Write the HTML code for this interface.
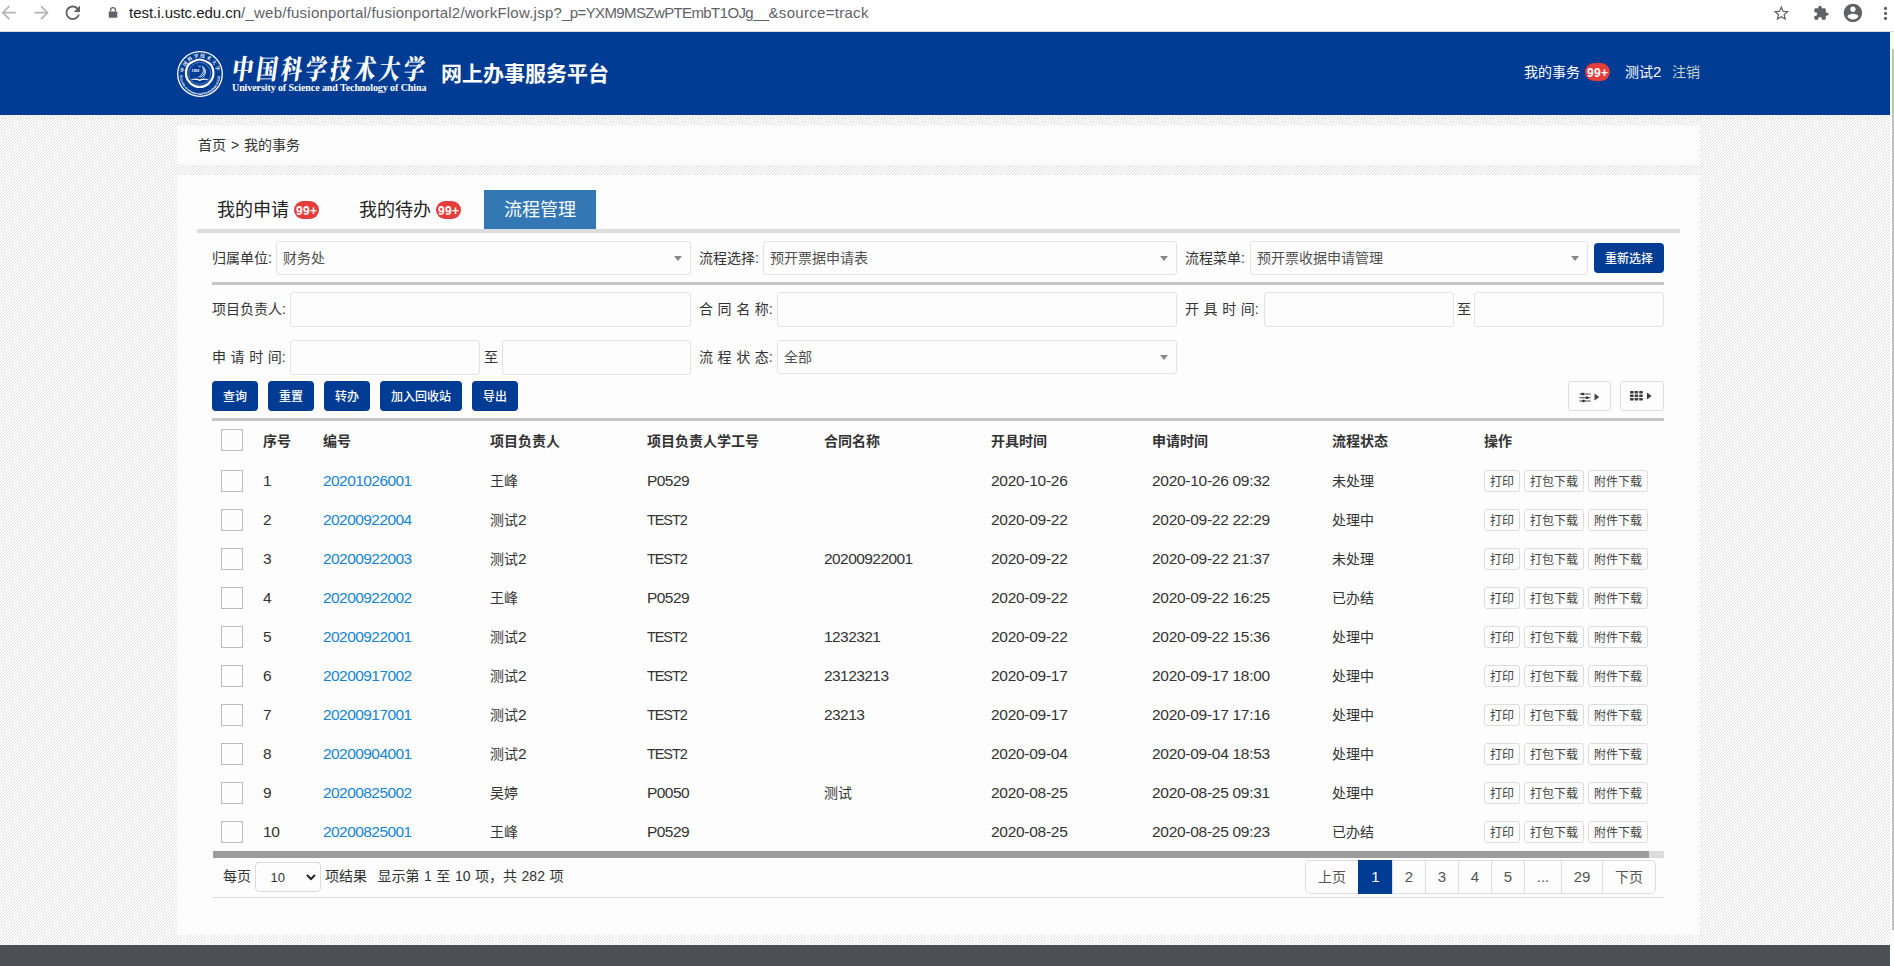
<!DOCTYPE html>
<html lang="zh-CN">
<head>
<meta charset="utf-8">
<title>网上办事服务平台</title>
<style>
*{box-sizing:border-box;margin:0;padding:0}
html,body{width:1894px;height:966px;overflow:hidden;background:#fff}
body{font-family:"Liberation Sans","Noto Sans CJK SC",sans-serif;font-size:14px;color:#333;position:relative}
a{text-decoration:none;color:inherit}
ul{list-style:none}
#hatch{position:absolute;left:0;top:115px;width:1890px;height:851px;display:block}
/* browser chrome */
#chrome{position:absolute;left:0;top:0;width:1894px;height:32px;background:#fff;border-bottom:1px solid #d9dce0}
#chrome svg{position:absolute;display:block}
#url{position:absolute;left:129px;top:3px;height:20px;line-height:20px;font-size:15px;color:#5f6368;white-space:nowrap}
#url b{font-weight:normal;color:#202124}
#vs{position:absolute;left:1890px;top:32px;width:4px;height:934px;background:#fdfdfd}
#vs i{position:absolute;left:2px;top:17px;width:2px;height:881px;background:#c1c1c1}
/* header */
#hdr{position:absolute;left:0;top:32px;width:1890px;height:83px;background:#003b94;color:#fff}
#emb{position:absolute;left:176px;top:18px;display:block}
#cn{position:absolute;left:232px;top:20px;width:200px;height:32px;font-family:"Noto Serif CJK SC","Liberation Serif",serif;font-weight:900;font-size:21px;line-height:32px;letter-spacing:3.5px;white-space:nowrap;transform:skewX(-8deg) scaleY(1.3);transform-origin:50% 60%}
#en{position:absolute;left:232px;top:50px;font-family:"Liberation Serif",serif;font-weight:bold;font-size:10px;line-height:12px;white-space:nowrap;letter-spacing:-0.09px}
#ttl{position:absolute;left:441px;top:27px;font-size:21px;line-height:30px;font-weight:bold;white-space:nowrap}
#nav{position:absolute;left:1524px;top:30px;height:20px;line-height:20px;font-size:14px;white-space:nowrap}
#nav a{position:absolute;top:0}
.bdg{display:inline-block;background:#e53c3c;color:#fff;font-weight:bold;font-size:12px;line-height:20px;height:18px;width:25px;border-radius:9px;text-align:center;letter-spacing:0.3px;text-indent:0.5px;overflow:hidden}
/* panels */
.panel{position:absolute;left:177px;width:1523px;background:#fdfdfd}
#crumb{top:125px;height:40px;line-height:40px;padding-left:21px;font-size:14px;color:#333;word-spacing:1px}
#main{top:175px;height:760px}
#foot{position:absolute;left:0;top:945px;width:1890px;height:21px;background:#4c5055}
/* tabs */
#tabs{position:absolute;left:20px;top:15px;width:1483px;height:43px;border-bottom:4px solid #ddd;white-space:nowrap;font-size:0}
#tabs li{display:inline-block;vertical-align:top;height:39px;line-height:41px;overflow:hidden;padding:0 20px;font-size:18px;color:#222}
#tabs li .bdg{margin-left:5px;vertical-align:middle;position:relative;top:-1px}
#tabs li.on{background:#3377b5;color:#fff;margin-left:3px}
/* form */
.f{position:absolute;display:block;height:34px;line-height:34px;font-size:14px;color:#333;white-space:pre;word-spacing:0.7px}
.i{position:absolute;height:34px;border:1px solid #e2e2e2;border-radius:3px;background:#fdfdfd;font-size:14px;line-height:32px;color:#505050;padding-left:6px;white-space:nowrap}
.i.s:after{content:"";position:absolute;right:8px;top:14px;border-left:4px solid transparent;border-right:4px solid transparent;border-top:5px solid #888}
.hr{position:absolute;left:35px;width:1452px;height:3px;background:#c6c6c6}
button{font-family:inherit;border:0;padding:0;margin:0;cursor:pointer}
input{font-family:inherit;outline:none;margin:0}
.btn{position:absolute;display:block;height:30px;line-height:33px;overflow:hidden;background:#003b94;color:#fff;font-size:12px;font-weight:500;border-radius:4px;text-align:center;white-space:nowrap}
.ib{position:absolute;height:30px;border:1px solid #ddd;border-radius:3px;background:#fdfdfd}
.ib svg{position:absolute;display:block}
/* table */
#tbl{position:absolute;left:35px;top:246px;width:1452px;border-collapse:collapse;table-layout:fixed}
#tbl th{height:40px;font-size:14px;font-weight:bold;text-align:left;padding:0 0 2px 8px;color:#333;white-space:nowrap;vertical-align:middle}
#tbl td{height:39px;font-size:14px;text-align:left;padding:0 0 0 8px;color:#333;white-space:nowrap;vertical-align:middle;overflow:hidden}
#tbl .z{padding-bottom:2px}
#tbl .n{font-size:15.5px;letter-spacing:-0.28px}
#tbl .k{letter-spacing:-0.56px}
#tbl .t{font-size:14.5px;letter-spacing:-1.1px}
#tbl .c{padding-left:9px}
.cb{display:block;width:22px;height:22px;border:1px solid #bdbdbd;background:#fdfdfd}
#tbl thead .cb{position:relative;top:0px}
.lk{color:#1685d1}
.op{font-size:0 !important}
.ob{display:inline-block;height:22px;line-height:22px;overflow:hidden;border:1px solid #ddd;border-radius:3px;padding:0 5px;font-size:12px;color:#444;margin-right:4px;vertical-align:middle;background:#fdfdfd}
/* bottom */
#hsb{position:absolute;left:36px;top:676px;width:1451px;height:7px;background:#dcdcdc}
#hsb i{display:block;width:1436px;height:7px;background:#9c9c9c}
#pinfo{position:absolute;left:46px;top:686px;height:30px;line-height:30px;font-size:14px;color:#333;white-space:nowrap;word-spacing:0.65px}
#psel{position:absolute;left:78px;top:687px;width:66px;height:30px;border:1px solid #d8dbe2;border-radius:4px;background:#fdfdfd;font-size:13px;line-height:30px;padding-left:14.5px;color:#333}
#pline{position:absolute;left:35px;top:722px;width:1452px;height:1px;background:#ddd}
#pg{position:absolute;left:1128px;top:685px;height:34px;font-size:0;white-space:nowrap}
#pg li{display:inline-block;vertical-align:top;height:34px;line-height:32px;border:1px solid #ddd;margin-left:-1px;text-align:center;font-size:15px;color:#555;background:#fdfdfd}
#pg li.z{font-size:14px}
#pg li:first-child{margin-left:0;border-radius:5px 0 0 5px}
#pg li:last-child{border-radius:0 5px 5px 0}
#pg li.on{background:#003b94;border-color:#003b94;color:#fff}

</style>
</head>
<body>
<svg id="hatch" width="1890" height="851" shape-rendering="crispEdges"><defs><pattern id="hp" width="3" height="3" patternUnits="userSpaceOnUse"><rect x="0" y="0" width="1" height="1" fill="#dedede"/><rect x="2" y="1" width="1" height="1" fill="#dedede"/><rect x="1" y="2" width="1" height="1" fill="#dedede"/></pattern></defs><rect width="1890" height="851" fill="#fff"/><rect width="1890" height="851" fill="url(#hp)"/></svg>

<div id="chrome">
  <svg style="left:-1.6px;top:2.2px" width="21.3" height="21.3" viewBox="0 0 24 24"><path fill="#b2b5b9" d="M20 11H7.83l5.59-5.59L12 4l-8 8 8 8 1.41-1.41L7.83 13H20v-2z"/></svg>
  <svg style="left:31.1px;top:2.2px" width="21.3" height="21.3" viewBox="0 0 24 24"><path fill="#b2b5b9" d="M12 4l-1.41 1.41L16.17 11H4v2h12.17l-5.58 5.59L12 20l8-8z"/></svg>
  <svg style="left:62.3px;top:2.1px" width="21.6" height="21.6" viewBox="0 0 24 24"><path fill="#5f6368" d="M17.65 6.35C16.2 4.9 14.21 4 12 4c-4.42 0-7.99 3.58-7.99 8s3.57 8 7.99 8c3.73 0 6.84-2.55 7.73-6h-2.08c-.82 2.33-3.04 4-5.65 4-3.31 0-6-2.69-6-6s2.69-6 6-6c1.66 0 3.14.69 4.22 1.78L13 11h7V4l-2.35 2.35z"/></svg>
  <svg style="left:107px;top:6px" width="12" height="13" viewBox="0 0 12 13"><rect x="1.7" y="5.4" width="8.6" height="6.4" rx="0.8" fill="#5f6368"/><path d="M3.6 5.6V4a2.4 2.4 0 0 1 4.8 0v1.6" fill="none" stroke="#5f6368" stroke-width="1.3"/></svg>
  <div id="url"><span style="letter-spacing:0.236px"><b style="letter-spacing:-0.03px">test.i.ustc.edu.cn</b>/_web/fusionportal/fusionportal2/workFlow.jsp?</span><span style="letter-spacing:-0.61px">_p=YXM9MSZwPTEmbT1OJg__</span><span style="letter-spacing:0.3px">&amp;source=track</span></div>
  <svg style="left:1772px;top:4.2px" width="18.6" height="18.6" viewBox="0 0 24 24"><path fill="#5f6368" d="M22 9.24l-7.19-.62L12 2 9.19 8.63 2 9.24l5.46 4.73L5.82 21 12 17.27 18.18 21l-1.63-7.03L22 9.24zM12 15.4l-3.76 2.27 1-4.28-3.32-2.88 4.38-.38L12 6.1l1.71 4.04 4.38.38-3.32 2.88 1 4.28L12 15.4z"/></svg>
  <svg style="left:1812.6px;top:5.1px" width="16.2" height="16.2" viewBox="0 0 24 24"><path fill="#5f6368" d="M20.5 11H19V7c0-1.1-.9-2-2-2h-4V3.5C13 2.12 11.88 1 10.5 1S8 2.12 8 3.5V5H4c-1.1 0-1.99.9-1.99 2v3.8H3.5c1.49 0 2.7 1.21 2.7 2.7s-1.21 2.7-2.7 2.7H2V20c0 1.1.9 2 2 2h3.8v-1.5c0-1.49 1.21-2.7 2.7-2.7 1.49 0 2.7 1.21 2.7 2.7V22H17c1.1 0 2-.9 2-2v-4h1.5c1.38 0 2.5-1.12 2.5-2.5S21.88 11 20.5 11z"/></svg>
  <svg style="left:1842.2px;top:2px" width="21.9" height="21.9" viewBox="0 0 24 24"><path fill="#5f6368" d="M12 2C6.48 2 2 6.48 2 12s4.48 10 10 10 10-4.48 10-10S17.52 2 12 2zm0 3c1.66 0 3 1.34 3 3s-1.34 3-3 3-3-1.34-3-3 1.34-3 3-3zm0 14.2c-2.5 0-4.71-1.28-6-3.22.03-1.99 4-3.08 6-3.08 1.99 0 5.97 1.09 6 3.08-1.29 1.94-3.5 3.22-6 3.22z"/></svg>
  <svg style="left:1882px;top:5px" width="7" height="17" viewBox="0 0 7 17"><circle cx="3.5" cy="3.4" r="1.6" fill="#5f6368"/><circle cx="3.5" cy="8.4" r="1.6" fill="#5f6368"/><circle cx="3.5" cy="13.4" r="1.6" fill="#5f6368"/></svg>
</div>
<div id="vs"><i></i></div>

<div id="hdr">
  <svg id="emb" width="48" height="48" viewBox="-24 -24 48 48"><defs><path id="arcT" d="M-16.6 0A16.6 16.6 0 0 1 16.6 0"/><path id="arcB" d="M-19.4 1.5A19.4 19.4 0 0 0 19.4 1.5"/></defs><circle r="22.3" fill="none" stroke="#fff" stroke-width="1.3"/><path d="M-19.9 2A20 20 0 0 0 19.9 2" fill="none" stroke="#fff" stroke-width="0.5"/><text font-family="'Noto Serif CJK SC',serif" font-weight="900" font-size="4.6" letter-spacing="1.5" fill="#fff" text-anchor="middle"><textPath href="#arcT" startOffset="50%">中国科学技术大学</textPath></text><text font-family="'Liberation Serif',serif" font-weight="bold" font-size="3" letter-spacing="0.15" fill="#fff" text-anchor="middle"><textPath href="#arcB" startOffset="50%">University of Science and Technology of China</textPath></text><g transform="translate(-0.3,-0.6) scale(0.95)"><path d="M0 -14.6C3.2 -14.6 6 -13 9.4 -11.2C12.6 -9.4 13.6 -6.4 14.2 -3C14.8 0.6 14.6 3.6 12.6 6.8C10.6 10 8.4 12 5 13.4C1.8 14.6 -1.8 14.6 -5 13.4C-8.4 12 -10.6 10 -12.6 6.8C-14.6 3.6 -14.8 0.6 -14.2 -3C-13.6 -6.4 -12.6 -9.4 -9.4 -11.2C-6 -13 -3.2 -14.6 0 -14.6Z" fill="none" stroke="#fff" stroke-width="2.3"/><circle r="11.6" fill="none" stroke="#fff" stroke-width="0.5" opacity="0.7"/><text x="-4.6" y="-1.4" font-family="'Liberation Sans',sans-serif" font-weight="bold" font-size="3.6" fill="#fff" text-anchor="middle">1958</text><path d="M-1.5 4.2C3 1.6 5.2 -2.4 3 -7.4C7.4 -3.4 6.6 1 3 4.4M0.6 4.2C4.4 1.8 6.4 -1.6 5 -5M-8.6 6.4C-5.6 6.2 -3 5.4 0 7C3 5.4 5.6 6.2 8.6 6.4" fill="none" stroke="#fff" stroke-width="0.9"/><path d="M-8.6 6.4C-5.6 5.4 -2.6 5 0 6.6C2.6 5 5.6 5.4 8.6 6.4C5.6 6.6 2.6 6.4 0 8C-2.6 6.4 -5.6 6.6 -8.6 6.4Z" fill="#fff"/><path d="M-1.2 -8.2L0 -6.6L1.2 -8.2" fill="none" stroke="#fff" stroke-width="0.7"/></g></svg>
  <div id="cn">中国科学技术大学</div>
  <div id="en">University of Science and Technology of China</div>
  <div id="ttl">网上办事服务平台</div>
  <div id="nav"><a style="left:0">我的事务</a><span class="bdg" style="position:absolute;left:61px;top:1px">99+</span><a style="left:101px">测试<span style="font-size:15px">2</span></a><a style="left:148px;color:#c3d4cb">注销</a></div>
</div>

<div class="panel" id="crumb">首页 &gt; 我的事务</div>
<div class="panel" id="main">
<ul id="tabs"><li>我的申请<span class="bdg">99+</span></li><li>我的待办<span class="bdg">99+</span></li><li class="on">流程管理</li></ul>
<label class="f" style="left:35px;top:66px">归属单位:</label><div class="i s" style="left:99px;top:66px;width:415px">财务处</div>
<label class="f" style="left:522px;top:66px">流程选择:</label><div class="i s" style="left:586px;top:66px;width:414px">预开票据申请表</div>
<label class="f" style="left:1008px;top:66px">流程菜单:</label><div class="i s" style="left:1073px;top:66px;width:338px">预开票收据申请管理</div>
<button class="btn" type="button" style="left:1417px;top:68px;width:70px">重新选择</button>
<div class="hr" style="top:107px"></div>
<label class="f" style="left:35px;top:117px">项目负责人:</label><input class="i" type="text" style="left:113px;top:117px;width:401px;height:35px">
<label class="f" style="left:522px;top:117px">合 同 名 称:</label><input class="i" type="text" style="left:600px;top:117px;width:400px;height:35px">
<label class="f" style="left:1008px;top:117px">开 具 时 间:</label><input class="i" type="text" style="left:1087px;top:117px;width:190px;height:35px"><label class="f" style="left:1280px;top:117px">至</label><input class="i" type="text" style="left:1297px;top:117px;width:190px;height:35px">
<label class="f" style="left:35px;top:165px">申 请 时 间:</label><input class="i" type="text" style="left:113px;top:165px;width:190px;height:35px"><label class="f" style="left:307px;top:165px">至</label><input class="i" type="text" style="left:325px;top:165px;width:189px;height:35px">
<label class="f" style="left:522px;top:165px">流 程 状 态:</label><div class="i s" style="left:600px;top:165px;width:400px">全部</div>
<button class="btn" type="button" style="left:35px;top:206px;width:46px">查询</button><button class="btn" type="button" style="left:91px;top:206px;width:46px">重置</button><button class="btn" type="button" style="left:147px;top:206px;width:46px">转办</button><button class="btn" type="button" style="left:203px;top:206px;width:82px">加入回收站</button><button class="btn" type="button" style="left:295px;top:206px;width:46px">导出</button>
<div class="ib" style="left:1391px;top:206px;width:43px"><svg style="left:9.5px;top:9.5px" width="22" height="11" viewBox="0 0 22 11"><path d="M0.4 2h11.2M0.4 5.7h11.2M0.4 9h11.2" stroke="#444" stroke-width="1.1"/><rect x="2.4" y="0.7" width="2.6" height="2.6" rx="0.8" fill="#333"/><rect x="6.8" y="4.4" width="2.6" height="2.6" rx="0.8" fill="#333"/><rect x="3.2" y="7.7" width="2.6" height="2.6" rx="0.8" fill="#333"/><path d="M15.5 1.5l4.7 3.5-4.7 3.5z" fill="#444"/></svg></div>
<div class="ib" style="left:1443px;top:206px;width:44px"><svg style="left:9px;top:9.4px" width="24" height="10" viewBox="0 0 24 10"><g fill="#3c3c3c"><rect x="0" y="0" width="3.6" height="2.5" rx="0.4"/><rect x="4.6" y="0" width="3.6" height="2.5" rx="0.4"/><rect x="9.2" y="0" width="3.6" height="2.5" rx="0.4"/><rect x="0" y="3.5" width="3.6" height="2.5" rx="0.4"/><rect x="4.6" y="3.5" width="3.6" height="2.5" rx="0.4"/><rect x="9.2" y="3.5" width="3.6" height="2.5" rx="0.4"/><rect x="0" y="7" width="3.6" height="2.5" rx="0.4"/><rect x="4.6" y="7" width="3.6" height="2.5" rx="0.4"/><rect x="9.2" y="7" width="3.6" height="2.5" rx="0.4"/><path d="M16.9 1.6l4.8 3.5-4.8 3.5z"/></g></svg></div>
<div class="hr" style="top:243px"></div>

<table id="tbl"><colgroup><col style="width:43px"><col style="width:60px"><col style="width:167px"><col style="width:157px"><col style="width:177px"><col style="width:167px"><col style="width:161px"><col style="width:180px"><col style="width:152px"><col style="width:188px"></colgroup>
<thead><tr><th class="c"><span class="cb"></span></th><th>序号</th><th>编号</th><th>项目负责人</th><th>项目负责人学工号</th><th>合同名称</th><th>开具时间</th><th>申请时间</th><th>流程状态</th><th>操作</th></tr></thead>
<tbody>
<tr><td class="c"><span class="cb"></span></td><td class="n">1</td><td class="n k"><a class="lk">20201026001</a></td><td class="z">王峰</td><td class="n k">P0529</td><td class="z"></td><td class="n">2020-10-26</td><td class="n">2020-10-26 09:32</td><td class="z">未处理</td><td class="op"><a class="ob">打印</a><a class="ob">打包下载</a><a class="ob">附件下载</a></td></tr>
<tr><td class="c"><span class="cb"></span></td><td class="n">2</td><td class="n k"><a class="lk">20200922004</a></td><td class="z">测试<span class="n">2</span></td><td class="n t">TEST2</td><td class="z"></td><td class="n">2020-09-22</td><td class="n">2020-09-22 22:29</td><td class="z">处理中</td><td class="op"><a class="ob">打印</a><a class="ob">打包下载</a><a class="ob">附件下载</a></td></tr>
<tr><td class="c"><span class="cb"></span></td><td class="n">3</td><td class="n k"><a class="lk">20200922003</a></td><td class="z">测试<span class="n">2</span></td><td class="n t">TEST2</td><td class="n k">20200922001</td><td class="n">2020-09-22</td><td class="n">2020-09-22 21:37</td><td class="z">未处理</td><td class="op"><a class="ob">打印</a><a class="ob">打包下载</a><a class="ob">附件下载</a></td></tr>
<tr><td class="c"><span class="cb"></span></td><td class="n">4</td><td class="n k"><a class="lk">20200922002</a></td><td class="z">王峰</td><td class="n k">P0529</td><td class="z"></td><td class="n">2020-09-22</td><td class="n">2020-09-22 16:25</td><td class="z">已办结</td><td class="op"><a class="ob">打印</a><a class="ob">打包下载</a><a class="ob">附件下载</a></td></tr>
<tr><td class="c"><span class="cb"></span></td><td class="n">5</td><td class="n k"><a class="lk">20200922001</a></td><td class="z">测试<span class="n">2</span></td><td class="n t">TEST2</td><td class="n k">1232321</td><td class="n">2020-09-22</td><td class="n">2020-09-22 15:36</td><td class="z">处理中</td><td class="op"><a class="ob">打印</a><a class="ob">打包下载</a><a class="ob">附件下载</a></td></tr>
<tr><td class="c"><span class="cb"></span></td><td class="n">6</td><td class="n k"><a class="lk">20200917002</a></td><td class="z">测试<span class="n">2</span></td><td class="n t">TEST2</td><td class="n k">23123213</td><td class="n">2020-09-17</td><td class="n">2020-09-17 18:00</td><td class="z">处理中</td><td class="op"><a class="ob">打印</a><a class="ob">打包下载</a><a class="ob">附件下载</a></td></tr>
<tr><td class="c"><span class="cb"></span></td><td class="n">7</td><td class="n k"><a class="lk">20200917001</a></td><td class="z">测试<span class="n">2</span></td><td class="n t">TEST2</td><td class="n k">23213</td><td class="n">2020-09-17</td><td class="n">2020-09-17 17:16</td><td class="z">处理中</td><td class="op"><a class="ob">打印</a><a class="ob">打包下载</a><a class="ob">附件下载</a></td></tr>
<tr><td class="c"><span class="cb"></span></td><td class="n">8</td><td class="n k"><a class="lk">20200904001</a></td><td class="z">测试<span class="n">2</span></td><td class="n t">TEST2</td><td class="z"></td><td class="n">2020-09-04</td><td class="n">2020-09-04 18:53</td><td class="z">处理中</td><td class="op"><a class="ob">打印</a><a class="ob">打包下载</a><a class="ob">附件下载</a></td></tr>
<tr><td class="c"><span class="cb"></span></td><td class="n">9</td><td class="n k"><a class="lk">20200825002</a></td><td class="z">吴婷</td><td class="n k">P0050</td><td class="z">测试</td><td class="n">2020-08-25</td><td class="n">2020-08-25 09:31</td><td class="z">处理中</td><td class="op"><a class="ob">打印</a><a class="ob">打包下载</a><a class="ob">附件下载</a></td></tr>
<tr><td class="c"><span class="cb"></span></td><td class="n">10</td><td class="n k"><a class="lk">20200825001</a></td><td class="z">王峰</td><td class="n k">P0529</td><td class="z"></td><td class="n">2020-08-25</td><td class="n">2020-08-25 09:23</td><td class="z">已办结</td><td class="op"><a class="ob">打印</a><a class="ob">打包下载</a><a class="ob">附件下载</a></td></tr>
</tbody></table>
<div id="hsb"><i></i></div>
<div id="pinfo">每页<span style="display:inline-block;width:74px"></span>项结果<span style="display:inline-block;width:10.5px"></span>显示第 1 至 10 项，共 282 项</div>
<div id="psel">10<svg style="position:absolute;right:3px;top:9px" width="12" height="10" viewBox="0 0 12 10"><path d="M2 3l4 4 4-4" fill="none" stroke="#222" stroke-width="2"/></svg></div>
<div id="pline"></div>
<ul id="pg"><li class="z" style="width:54px">上页</li><li class="on" style="width:35px">1</li><li style="width:34px">2</li><li style="width:34px">3</li><li style="width:34px">4</li><li style="width:34px">5</li><li style="width:38px">...</li><li style="width:42px">29</li><li class="z" style="width:54px">下页</li></ul>
</div>
<div id="foot"></div>
</body>
</html>
